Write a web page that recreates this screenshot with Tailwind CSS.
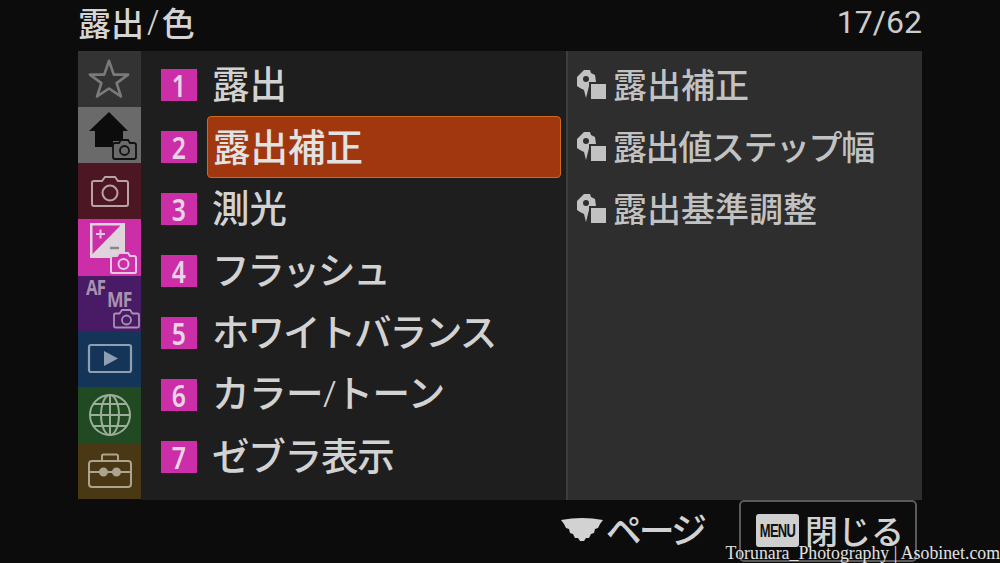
<!DOCTYPE html>
<html lang="ja">
<head>
    <meta charset="UTF-8">
    <title>露出/色</title>
    <script src="https://cdn.jsdelivr.net/npm/@tailwindcss/browser@4"></script>
</head>
<body class="bg-[#0c0c0c]">
    <div class="relative w-[1000px] h-[563px] overflow-hidden pl-[78px] pr-[78px] font-['Noto_Sans_CJK_JP','Noto_Sans',sans-serif] font-medium text-[#d2d2d2]">
        <!-- Header -->
        <header class="h-[51px] flex justify-between items-center pb-[7px]">
            <div class="flex items-center text-[33px] leading-[44px] text-[#d4d4d4]">露出<span class="font-['Noto_Sans'] font-light mx-[3px] text-[34px]">/</span>色</div>
            <div class="font-['Roboto'] font-normal text-[32px] leading-[40px] text-[#cccccc]">17/62</div>
        </header>

        <!-- Panel -->
        <div class="flex h-[449px]">
            <!-- Tabs -->
            <div class="w-[63px] flex flex-col shrink-0">
                <div class="h-[56px] bg-[#333333] flex items-center justify-center pb-[2px] pr-[2px]">
                    <svg width="42" height="42" viewBox="0 0 44 44" fill="none" stroke="#7a7a7a" stroke-width="2.800" stroke-linejoin="round"><path d="M22 4l5 14.500h15l-12 8.800 4.500 14L22 33l-12.500 8.300 4.500-14-12-8.800h15z"/></svg>
                </div>
                <div class="h-[56px] bg-[#6a6a6a]">
                    <svg width="63" height="56" viewBox="0 0 63 56"><path d="M31 5L11 24h6v16h18v-6h10V24h5z" fill="#0c0c0c"/><path d="M35 50V38a2 2 0 0 1 2-2h4l2-3h7l2 3h4a2 2 0 0 1 2 2v12a2 2 0 0 1-2 2H37a2 2 0 0 1-2-2z" fill="#6a6a6a" stroke="#111" stroke-width="1.800"/><circle cx="46.500" cy="43.500" r="4.500" fill="none" stroke="#111" stroke-width="1.800"/></svg>
                </div>
                <div class="h-[56px] bg-[#4c1722] flex items-center justify-center">
                    <svg width="40" height="34" viewBox="0 0 40 34" fill="none" stroke="#b8a2a6" stroke-width="2"><path d="M2 30V9a2 2 0 0 1 2-2h8l3-4h10l3 4h8a2 2 0 0 1 2 2v21a2 2 0 0 1-2 2H4a2 2 0 0 1-2-2z"/><circle cx="20" cy="19" r="7.500"/></svg>
                </div>
                <div class="h-[57px] bg-[#cb2ea6]">
                    <svg width="63" height="57" viewBox="0 0 63 57"><path d="M12 4h35v35H12z" fill="#e0d4dc"/><path d="M14.500 6.500h28L14.500 35z" fill="#cb2ea6"/><path d="M18 15h9M22.500 10.500v9" stroke="#e6c8df" stroke-width="2" fill="none"/><path d="M32 29h9" stroke="#888" stroke-width="2.500" fill="none"/><path d="M33 53V39a2 2 0 0 1 2-2h4l2-3h9l2 3h4a2 2 0 0 1 2 2v14a1 1 0 0 1-1 1H34a1 1 0 0 1-1-1z" fill="#cb2ea6" stroke="#e6c8df" stroke-width="2"/><circle cx="45.500" cy="45" r="5" fill="none" stroke="#e6c8df" stroke-width="2"/></svg>
                </div>
                <div class="relative h-[55px] bg-[#491b66] text-[#a892b0] font-['Open_Sans'] font-bold leading-none">
                    <span class="absolute left-[8px] top-[1px] text-[21px] tracking-[-1px] scale-x-[0.8] origin-left">AF</span>
                    <span class="absolute left-[29px] top-[11px] text-[22px] tracking-[-1px] scale-x-[0.8] origin-left">MF</span>
                    <svg class="absolute left-[35px] top-[32px]" width="27" height="21" viewBox="0 0 27 21" fill="none" stroke="#a892b0" stroke-width="1.800"><path d="M1 18V7a1.500 1.500 0 0 1 1.500-1.500h4L9 2h8l2.500 3.500h5A1.500 1.500 0 0 1 26 7v11a1.500 1.500 0 0 1-1.500 1.500h-22A1.500 1.500 0 0 1 1 18z"/><circle cx="13.500" cy="12" r="4.500"/></svg>
                </div>
                <div class="h-[56px] bg-[#153558] flex items-center justify-center">
                    <svg width="46" height="32" viewBox="0 0 46 32"><rect x="2" y="2" width="42" height="27" rx="2" fill="none" stroke="#8da0b3" stroke-width="2.200"/><path d="M17 8l14 7.500L17 23z" fill="#8da0b3"/></svg>
                </div>
                <div class="h-[56px] bg-[#214a22] flex items-center justify-center">
                    <svg width="44" height="44" viewBox="0 0 44 44" fill="none" stroke="#9aae9a" stroke-width="2"><circle cx="22" cy="22" r="20"/><ellipse cx="22" cy="22" rx="9" ry="20"/><path d="M22 2v40M6 11h32M2 22h40M6 33h32"/></svg>
                </div>
                <div class="h-[56px] bg-[#4a3713] flex items-center justify-center">
                    <svg width="46" height="36" viewBox="0 0 46 36" fill="none" stroke="#aba48e" stroke-width="2"><path d="M15 8V3a1.500 1.500 0 0 1 1.500-1.500h13A1.500 1.500 0 0 1 31 3v5"/><rect x="2" y="8" width="42" height="26" rx="3"/><path d="M2 19h11M20 19h6M33 19h11"/><circle cx="16.500" cy="19" r="3.500" fill="#aba48e"/><circle cx="29.500" cy="19" r="3.500" fill="#aba48e"/></svg>
                </div>
            </div>

            <!-- Main list -->
            <div class="w-[425px] bg-[#1e1e1e] shrink-0 pt-[3px]">
                <div class="h-[62px] flex items-center pl-[20px]"><span class="w-[36px] h-[32px] bg-[#cb2ea6] flex items-center justify-center text-[#e8d4e4] leading-none"><span class="text-[31px] font-semibold font-['Noto_Sans'] scale-x-[0.8]">1</span></span><span class="ml-[15px] pb-[6px] text-[37.500px] leading-[44px]">露出</span></div>
                <div class="h-[62px] flex items-center pl-[20px]"><span class="w-[36px] h-[32px] bg-[#cb2ea6] flex items-center justify-center text-[#e8d4e4] leading-none"><span class="text-[31px] font-semibold font-['Noto_Sans'] scale-x-[0.8]">2</span></span><span class="ml-[10px] w-[354px] h-[62px] flex items-center pl-[5px] pb-[5px] bg-[#a0370f] border border-[#d06a20] rounded-[4px] text-[37.500px] text-[#e2e2e2] leading-[44px]">露出補正</span></div>
                <div class="h-[62px] flex items-center pl-[20px]"><span class="w-[36px] h-[32px] bg-[#cb2ea6] flex items-center justify-center text-[#e8d4e4] leading-none"><span class="text-[31px] font-semibold font-['Noto_Sans'] scale-x-[0.8]">3</span></span><span class="ml-[15px] pb-[6px] text-[37.500px] leading-[44px]">測光</span></div>
                <div class="h-[62px] flex items-center pl-[20px]"><span class="w-[36px] h-[32px] bg-[#cb2ea6] flex items-center justify-center text-[#e8d4e4] leading-none"><span class="text-[31px] font-semibold font-['Noto_Sans'] scale-x-[0.8]">4</span></span><span class="ml-[15px] pb-[6px] text-[37.500px] leading-[44px] tracking-[-2.200px]">フラッシュ</span></div>
                <div class="h-[62px] flex items-center pl-[20px]"><span class="w-[36px] h-[32px] bg-[#cb2ea6] flex items-center justify-center text-[#e8d4e4] leading-none"><span class="text-[31px] font-semibold font-['Noto_Sans'] scale-x-[0.8]">5</span></span><span class="ml-[15px] pb-[6px] text-[37.500px] leading-[44px] tracking-[-2px]">ホワイトバランス</span></div>
                <div class="h-[62px] flex items-center pl-[20px]"><span class="w-[36px] h-[32px] bg-[#cb2ea6] flex items-center justify-center text-[#e8d4e4] leading-none"><span class="text-[31px] font-semibold font-['Noto_Sans'] scale-x-[0.8]">6</span></span><span class="ml-[15px] pb-[6px] text-[37.500px] leading-[44px] tracking-[-0.500px]">カラー<span class="font-['Noto_Sans'] font-light">/</span>トーン</span></div>
                <div class="h-[62px] flex items-center pl-[20px]"><span class="w-[36px] h-[32px] bg-[#cb2ea6] flex items-center justify-center text-[#e8d4e4] leading-none"><span class="text-[31px] font-semibold font-['Noto_Sans'] scale-x-[0.8]">7</span></span><span class="ml-[15px] pb-[6px] text-[37.500px] leading-[44px] tracking-[-1.200px]">ゼブラ表示</span></div>
            </div>

            <!-- Sub list -->
            <div class="flex-1 bg-[#2e2e2e] border-l-2 border-[#3e3e3e] pt-[3px] text-[#c2c2c2]">
                <div class="h-[62px] flex items-center pl-[8px] gap-[5px]">
                    <svg width="32" height="32" viewBox="0 0 32 32"><path d="M8 1h6l1 3 4 2 1 7h-7v4l-3 12-2-8-4-2-3-2V8l3-3z" fill="#c2c2c2"/><circle cx="10" cy="10" r="3" fill="#2e2e2e"/><rect x="15" y="15" width="15" height="15" fill="#c2c2c2"/></svg>
                    <span class="text-[34px] leading-[40px] pb-[3px]">露出補正</span>
                </div>
                <div class="h-[62px] flex items-center pl-[8px] gap-[5px]">
                    <svg width="32" height="32" viewBox="0 0 32 32"><path d="M8 1h6l1 3 4 2 1 7h-7v4l-3 12-2-8-4-2-3-2V8l3-3z" fill="#c2c2c2"/><circle cx="10" cy="10" r="3" fill="#2e2e2e"/><rect x="15" y="15" width="15" height="15" fill="#c2c2c2"/></svg>
                    <span class="text-[34px] leading-[40px] pb-[3px] tracking-[-1.400px]">露出値ステップ幅</span>
                </div>
                <div class="h-[62px] flex items-center pl-[8px] gap-[5px]">
                    <svg width="32" height="32" viewBox="0 0 32 32"><path d="M8 1h6l1 3 4 2 1 7h-7v4l-3 12-2-8-4-2-3-2V8l3-3z" fill="#c2c2c2"/><circle cx="10" cy="10" r="3" fill="#2e2e2e"/><rect x="15" y="15" width="15" height="15" fill="#c2c2c2"/></svg>
                    <span class="text-[34px] leading-[40px] pb-[3px]">露出基準調整</span>
                </div>
            </div>
        </div>

        <!-- Footer -->
        <footer class="flex justify-end items-start pr-[5px]">
            <div class="flex items-center h-[63px] mr-[35px] pb-[4px]">
                <svg width="42" height="26" viewBox="0 0 42 26"><path d="M0 3q21-4 42 0l-3 4-2 4-3 1-1 4-3 1-2 4-3 0-2 3h-4l-2-3-3 0-2-4-3-1-1-4-3-1-2-4z" fill="#d2d2d2"/></svg>
                <span class="text-[36px] leading-[44px] ml-[3px] tracking-[-3px] pb-[3px] text-[#d2d2d2]">ページ</span>
            </div>
            <div class="w-[178px] h-[62px] border-2 border-[#5a5a5a] rounded-[5px] flex items-center pl-[15px] pb-[1px] gap-[6px]">
                <span class="w-[43px] h-[33px] bg-[#cfcfcf] rounded-[3px] flex items-center justify-center text-[#111]"><span class="font-['Liberation_Sans'] font-bold text-[18px] leading-none tracking-[-1px] scale-x-[0.72]">MENU</span></span>
                <span class="text-[33px] leading-[40px] pb-[2px] text-[#d2d2d2]">閉じる</span>
            </div>
        </footer>

        <!-- Watermark -->
        <div class="absolute right-0 bottom-0 h-[20px] font-['Liberation_Serif',serif] font-normal text-[17.800px] leading-[20px] text-[#e2e2e2] whitespace-nowrap">Torunara_Photography | Asobinet.com</div>
    </div>
</body>
</html>
